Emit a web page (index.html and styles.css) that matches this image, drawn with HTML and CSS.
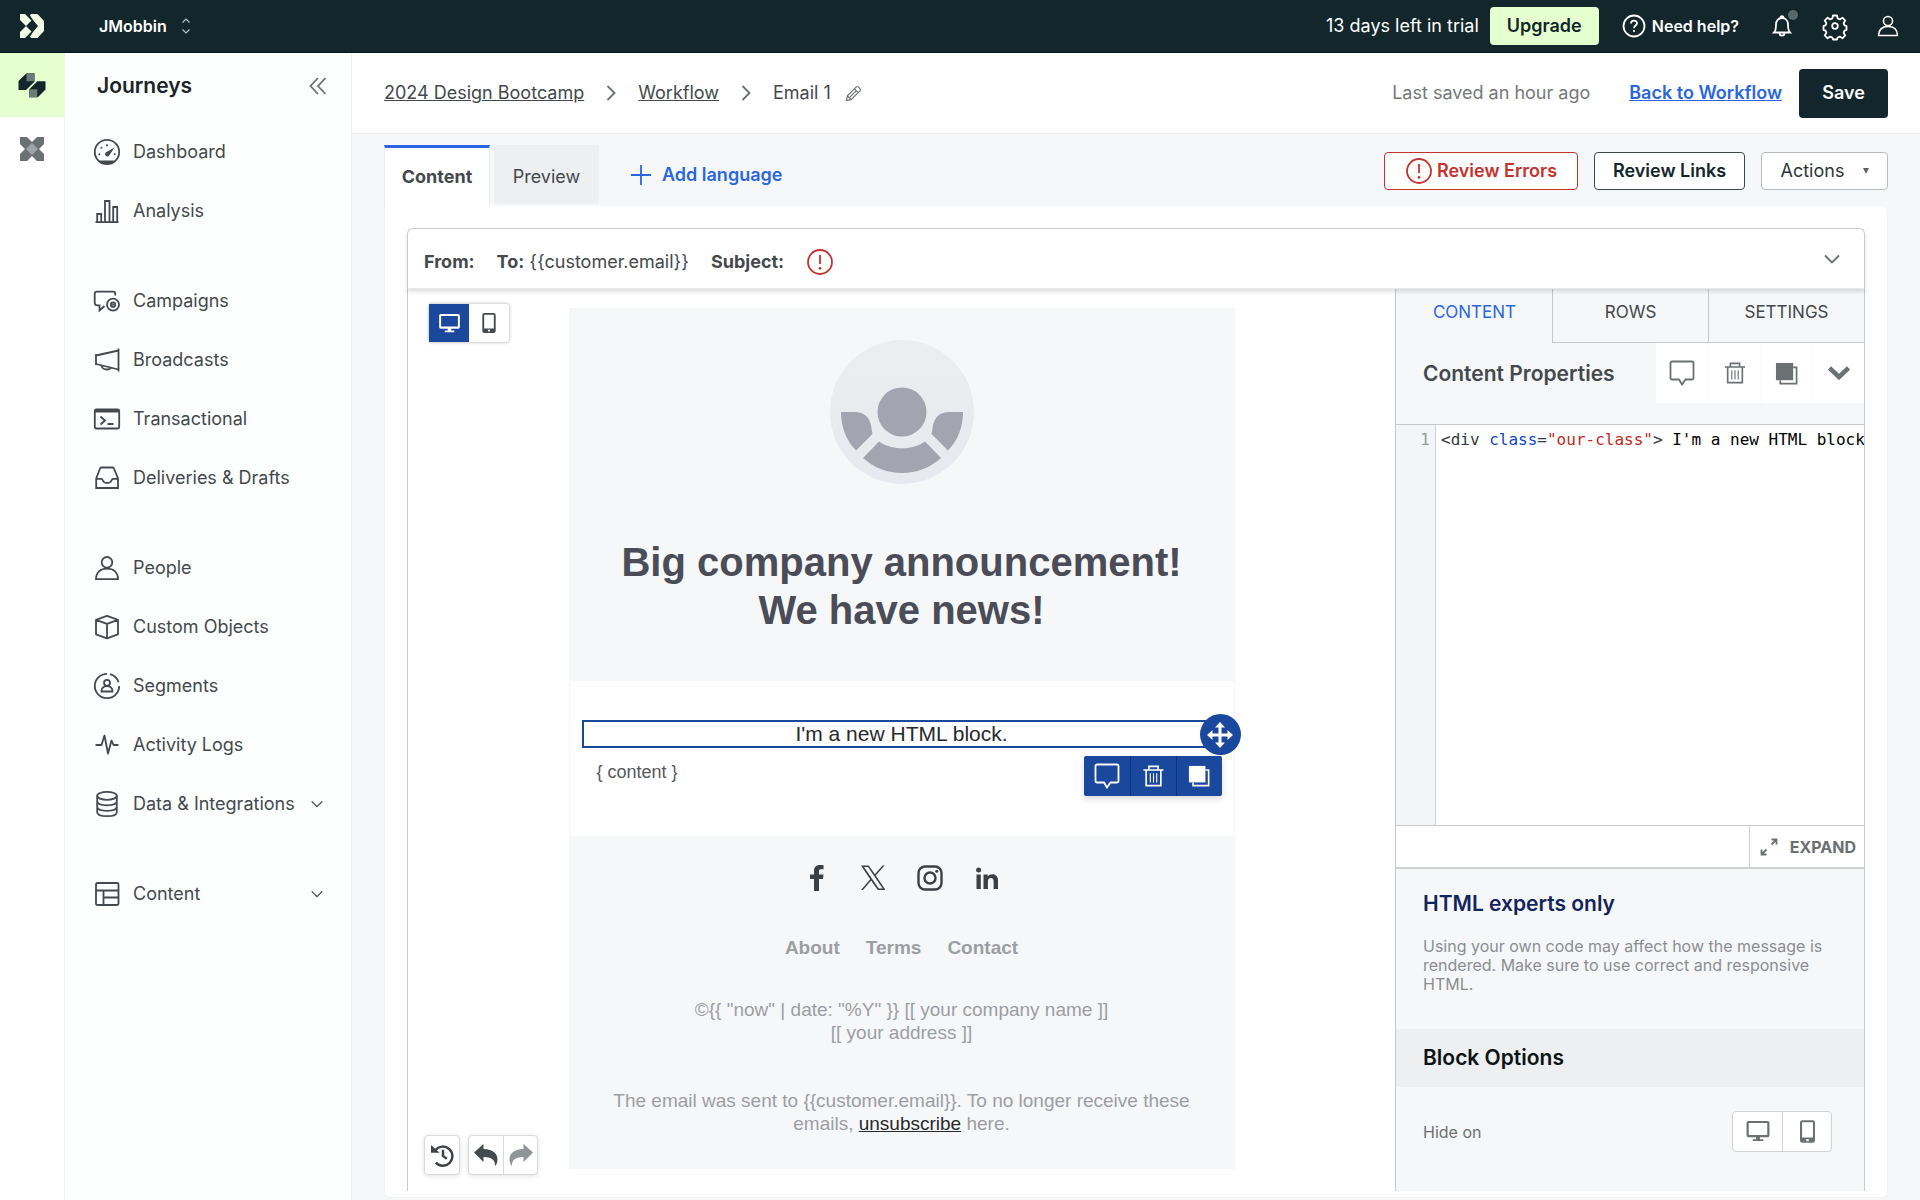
FILE: index.html
```html
<!DOCTYPE html>
<html lang="en">
<head>
<meta charset="utf-8">
<meta name="viewport" content="width=device-width, initial-scale=1">
<title>Email 1 – Journeys</title>
<link rel="stylesheet" href="styles.css">
</head>
<body>
<svg class="sprite" aria-hidden="true">
  <symbol id="chevron-right" viewBox="0 0 10 16"><path d="M1.500 1l7 7-7 7"/></symbol>
  <symbol id="chevron-down" viewBox="0 0 16 10"><path d="M1 1.500l7 7 7-7"/></symbol>
  <symbol id="alert" viewBox="0 0 28 28"><circle cx="14" cy="14" r="12"/><path d="M14 7v9"/><circle class="solid" cx="14" cy="20.300" r="1.400"/></symbol>
  <symbol id="person" viewBox="0 0 28 28"><circle cx="14" cy="8.300" r="5.300"/><path d="M3 25.200c0-7 4.500-10.500 11-10.500s11 3.500 11 10.500z"/></symbol>
  <symbol id="desktop" viewBox="0 0 24 22"><path class="solid" fill-rule="evenodd" d="M2 0h20a2 2 0 0 1 2 2v13a2 2 0 0 1-2 2h-8v2h3.500v2h-11v-2H10v-2H2a2 2 0 0 1-2-2V2a2 2 0 0 1 2-2zm.300 2.200v12.400h19.400V2.200z"/></symbol>
  <symbol id="mobile" viewBox="0 0 16 24"><path class="solid" fill-rule="evenodd" d="M2.500 0h11A2.500 2.500 0 0 1 16 2.500v19a2.500 2.500 0 0 1-2.500 2.500h-11A2.500 2.500 0 0 1 0 21.500v-19A2.500 2.500 0 0 1 2.500 0zM2.200 2.200v16.300h11.600V2.200zM6.700 20v2.300h2.600V20z"/></symbol>
  <symbol id="comment" viewBox="0 0 26 26"><path d="M3 1.500h20a1.500 1.500 0 0 1 1.500 1.500v15a1.500 1.500 0 0 1-1.500 1.500h-6.500L13 24.500l-3-5H3A1.500 1.500 0 0 1 1.500 18V3A1.500 1.500 0 0 1 3 1.500z"/></symbol>
  <symbol id="trash" viewBox="0 0 22 24"><path d="M0 5.500h22M6 5V1.500h10V5M3 6v16.500h16V6"/><path class="thin" d="M7.500 9v10M11 9v10M14.500 9v10"/></symbol>
  <symbol id="copy" viewBox="0 0 24 24"><path class="solid" d="M1 1h18v18H1z"/><path d="M19 5.500h3.500v17h-17V19"/></symbol>
</svg>

<header class="topbar">
  <a class="topbar-logo" href="#" aria-label="Home">
    <svg width="24" height="24" viewBox="0 0 24 24"><path fill="#f2ffe6" d="M0 0h5l6.500 6.500L6 12 0 6zM0 24h5l6.500-6.500L6 12l-6 6zM11 0h6.500L24 7v10l-6.500 7H11l-1-1.500L13 18l5-6-5-6-3-4.500z"/></svg>
  </a>
  <button class="workspace" type="button">JMobbin
    <svg class="line" width="10" height="16" viewBox="0 0 10 16"><path d="M1.500 4.500L5 1l3.500 3.500M1.500 11.500L5 15l3.500-3.500"/></svg>
  </button>
  <span class="trial">13 days left in trial</span>
  <button class="upgrade" type="button">Upgrade</button>
  <a class="help" href="#">
    <svg class="line" width="24" height="24" viewBox="0 0 24 24"><circle cx="12" cy="12" r="10.500"/><path d="M9 9.500c0-4 6-3.800 6-.300 0 2.300-3 2.400-3 5"/><circle class="solid" cx="12" cy="17" r="1.100"/></svg>
    Need help?
  </a>
  <button class="top-icon bell" type="button" aria-label="Notifications">
    <svg class="line" width="22" height="24" viewBox="0 0 22 24"><path d="M3 18.500c2-2 2-4 2-8 0-3.800 2.500-6.500 6-6.500s6 2.700 6 6.500c0 4 0 6 2 8zM9.500 3.700C9.500 1.500 12.500 1.500 12.500 3.700M8.500 19c0 3.500 5 3.500 5 0"/></svg>
    <span class="bell-dot"></span>
  </button>
  <button class="top-icon" type="button" aria-label="Settings">
    <svg class="line" width="24" height="24" viewBox="0 0 24 24"><circle cx="12" cy="12" r="2.800"/><path stroke-linejoin="round" d="M10 1.500h4l.700 3 2.100.900 2.600-1.700 2.900 2.900-1.700 2.600.900 2.100 2 .700v4l-2 .700-.900 2.100 1.700 2.600-2.900 2.900-2.600-1.700-2.100.900-.700 2h-4l-.700-2-2.100-.900-2.600 1.700-2.900-2.900 1.700-2.600-.900-2.100-2-.700v-4l2-.700.900-2.100-1.700-2.600 2.900-2.900 2.600 1.700 2.100-.900z"/></svg>
  </button>
  <button class="top-icon" type="button" aria-label="Account">
    <svg class="line" width="24" height="24"><use href="#person"/></svg>
  </button>
</header>

<div class="shell">
  <nav class="rail" aria-label="Products">
    <a class="rail-item active" href="#" aria-label="Journeys">
      <svg width="28" height="25" viewBox="0 0 28 25"><path fill="#12262b" d="M.500 8l8-7.800h8v8.500L8 17H.500zM11.300 16.300l8-8h8.200v8.200l-7.700 7.800h-8.500z"/><path fill="#6d7b78" d="M8.500.200h8v8h-8zM11.300 16.300h8v8h-8z"/></svg>
    </a>
    <a class="rail-item" href="#" aria-label="Data Pipelines">
      <svg width="24" height="24" viewBox="0 0 24 24"><path fill="#6b7072" d="M0 0h7l5 5 5-5h7v7l-5 5 5 5v7h-7l-5-5-5 5H0v-7l5-5-5-5z"/><path fill="#a0a4a6" d="M12 6l6 6-6 6-6-6z"/></svg>
    </a>
  </nav>

  <aside class="sidebar">
    <div class="sidebar-head">
      <h2>Journeys</h2>
      <button class="plain" type="button" aria-label="Collapse menu"><svg class="line" width="18" height="18" viewBox="0 0 18 18"><path d="M9 1L1.500 9 9 17M16.500 1L9 9l7.500 8"/></svg></button>
    </div>
    <nav class="menu" aria-label="Journeys">
      <div class="menu-group">
        <a href="#"><svg class="line" width="28" height="28" viewBox="0 0 28 28"><circle cx="14" cy="14" r="12.200"/><path class="solid" d="M6 22.500h16l-3 2.600-5 1.300-5-1.300z"/><path class="solid" d="M21.500 9.500l-5.500 8.200a2.300 2.300 0 1 1-3.300-3.200z"/><g class="solid"><circle cx="14" cy="7.300" r="1.100"/><circle cx="8.400" cy="9.700" r="1"/><circle cx="6.300" cy="16.200" r="1"/><circle cx="21.700" cy="16.200" r="1"/></g></svg>Dashboard</a>
        <a href="#"><svg class="line" width="28" height="28" viewBox="0 0 28 28"><path d="M2.500 25.200h23M4.200 25v-8h4v8M12 25V4h4.500v21M20.200 25V10h4v15"/></svg>Analysis</a>
      </div>
      <div class="menu-group">
        <a href="#"><svg class="line" width="28" height="28" viewBox="0 0 28 28"><path d="M22.300 8.500V7a2.300 2.300 0 0 0-2.300-2.300H4A2.300 2.300 0 0 0 1.700 7v9A2.300 2.300 0 0 0 4 18.300h2.500v5.200l5-4.500"/><circle cx="20" cy="17.700" r="6"/><circle cx="20" cy="17.700" r="2.200"/><circle class="solid" cx="20" cy="17.700" r="1"/></svg>Campaigns</a>
        <a href="#"><svg class="line" width="28" height="28" viewBox="0 0 28 28"><path d="M25.500 2.500v23M25.500 4.500L3 9.500M3 8v11M3 18l22.500 5.500M8.500 19.500c.500 4.500 7 5 9.500 2.400"/></svg>Broadcasts</a>
        <a href="#"><svg class="line" width="28" height="28" viewBox="0 0 28 28"><rect x="1.800" y="4.500" width="24.400" height="19" rx="1.500"/><path class="solid" d="M2 4.500h24v3H2z"/><path d="M7.500 11.500l4.500 4-4.500 4M14.500 19h6"/></svg>Transactional</a>
        <a href="#"><svg class="line" width="28" height="28" viewBox="0 0 28 28"><path d="M3.200 14.500L7 4.500a1.500 1.500 0 0 1 1.200-1h11.600a1.500 1.500 0 0 1 1.200 1l4 10v9.500H3.200zM3.200 14.800h5.500c1 0 1 4 4 4h3c3 0 3-4 4-4h5.300"/></svg>Deliveries &amp; Drafts</a>
      </div>
      <div class="menu-group">
        <a href="#"><svg class="line" width="28" height="28"><use href="#person"/></svg>People</a>
        <a href="#"><svg class="line" width="28" height="28" viewBox="0 0 28 28"><path stroke-linejoin="round" d="M14 2.800l11 4v14.500l-11 4-11-4V6.800zM3 6.800l11 4 11-4M14 10.800v14.500"/></svg>Custom Objects</a>
        <a href="#"><svg class="line" width="28" height="28" viewBox="0 0 28 28"><path d="M14 1.800A12.200 12.200 0 1 0 26.200 14M17 2.200a12.200 12.200 0 0 1 8.500 8"/><circle cx="14" cy="10.800" r="3"/><path d="M8.500 19.500c0-3.500 2.500-5.500 5.500-5.500s5.500 2 5.500 5.500z"/></svg>Segments</a>
        <a href="#"><svg class="line" width="28" height="28" viewBox="0 0 28 28"><path stroke-linejoin="round" d="M2.500 14h6l3-9.500 3.500 18 3.500-13 2 4.500h5"/></svg>Activity Logs</a>
        <a href="#"><svg class="line" width="28" height="28" viewBox="0 0 28 28"><ellipse cx="14" cy="5.800" rx="9.800" ry="4"/><path d="M4.200 5.800v16.400c0 5.300 19.600 5.300 19.600 0V5.800M4.200 11.300c0 5.300 19.600 5.300 19.600 0M4.200 16.800c0 5.300 19.600 5.300 19.600 0"/></svg>Data &amp; Integrations<svg class="line caret" width="12" height="8"><use href="#chevron-down"/></svg></a>
      </div>
      <div class="menu-group">
        <a href="#"><svg class="line" width="28" height="28" viewBox="0 0 28 28"><rect x="3" y="3" width="22.500" height="22" rx="1.500"/><path d="M3 10.500h22.500M10.500 10.500V25M10.500 17.500h15"/></svg>Content<svg class="line caret" width="12" height="8"><use href="#chevron-down"/></svg></a>
      </div>
    </nav>
  </aside>

  <main class="main">
    <div class="page-head">
      <nav class="crumbs" aria-label="Breadcrumb">
        <a href="#">2024 Design Bootcamp</a>
        <svg class="line" width="10" height="16"><use href="#chevron-right"/></svg>
        <a href="#">Workflow</a>
        <svg class="line" width="10" height="16"><use href="#chevron-right"/></svg>
        <span class="crumb-current">Email 1
          <button class="plain" type="button" aria-label="Rename"><svg class="line" width="17" height="17" viewBox="0 0 18 18"><path d="M1.500 16.500l1-5L12 2a1.500 1.500 0 0 1 2 0l2 2a1.500 1.500 0 0 1 0 2l-9.500 9.500zM10 4l4 4M2.500 11.500l4 4M12 6l-7 7"/></svg></button>
        </span>
      </nav>
      <span class="saved">Last saved an hour ago</span>
      <a class="back" href="#">Back to Workflow</a>
      <button class="save" type="button">Save</button>
    </div>

    <div class="toolbar">
      <button class="tab active" type="button">Content</button>
      <button class="tab" type="button">Preview</button>
      <button class="add-language" type="button"><svg class="line" width="22" height="22" viewBox="0 0 22 22"><path d="M11 1v20M1 11h20"/></svg>Add language</button>
      <div class="toolbar-actions">
        <button class="outline danger" type="button"><svg class="line" width="28" height="28"><use href="#alert"/></svg>Review Errors</button>
        <button class="outline dark" type="button">Review Links</button>
        <label class="outline select"><select aria-label="Actions"><option>Actions</option></select><svg width="6" height="6" viewBox="0 0 6 6"><path fill="#5c6164" d="M0 0h6L3 6z"/></svg></label>
      </div>
    </div>

    <section class="card">
      <div class="builder">
        <div class="envelope">
          <b>From:</b>
          <span><b>To:</b> {{customer.email}}</span>
          <b>Subject:</b>
          <svg class="line alert" width="28" height="28"><use href="#alert"/></svg>
          <button class="plain envelope-toggle" type="button" aria-label="Show details"><svg class="line" width="16" height="10"><use href="#chevron-down"/></svg></button>
        </div>

        <div class="workarea">
          <div class="canvas">
            <div class="device-toggle">
              <button class="active" type="button" aria-label="Desktop"><svg width="21" height="19"><use href="#desktop"/></svg></button>
              <button type="button" aria-label="Mobile"><svg width="14" height="20"><use href="#mobile"/></svg></button>
            </div>

            <article class="email">
              <div class="email-hero">
                <svg width="144" height="144" viewBox="0 0 144 144">
                  <defs><linearGradient id="disc" x2="0" y2="1"><stop offset="0" stop-color="#ecedef"/><stop offset="1" stop-color="#e6e9ef"/></linearGradient></defs>
                  <circle cx="72" cy="72" r="72" fill="url(#disc)"/>
                  <g fill="#a2a5b0"><circle cx="72" cy="72" r="24.500"/><path d="M11 72h14c9 0 14 5 16 13 .500 4 1 7 1.500 9L26 110.500C16 100 11 87 11 72z"/><path d="M133 72h-14c-9 0-14 5-16 13-.500 4-1 7-1.500 9l16.500 16.500C128 100 133 87 133 72z"/><path d="M49 101.500c12 9 34 9 46 0L111 118c-22 20-56 20-78 0z"/></g>
                </svg>
                <h1>Big company announcement! We have news!</h1>
              </div>
              <div class="email-body">
                <div class="html-block">I'm a new HTML block.
                  <button class="move" type="button" aria-label="Move block"><svg width="26" height="26" viewBox="0 0 26 26"><path fill="#fff" d="M13 0l5 5.500h-3.500v6h6V8l5.500 5-5.500 5v-3.500h-6v6H18L13 26l-5-5.500h3.500v-6h-6V18L0 13l5.500-5v3.500h6v-6H8z"/></svg></button>
                  <div class="block-tools">
                    <button type="button" aria-label="Comment"><svg class="line" width="26" height="26"><use href="#comment"/></svg></button>
                    <button type="button" aria-label="Delete"><svg class="line" width="21" height="22"><use href="#trash"/></svg></button>
                    <button type="button" aria-label="Duplicate"><svg class="line" width="22" height="22"><use href="#copy"/></svg></button>
                  </div>
                </div>
                <p>{ content }</p>
              </div>
              <footer class="email-foot">
                <div class="social">
                  <a href="#" aria-label="Facebook"><svg width="24" height="26" viewBox="0 0 24 26"><path d="M9 26V14H5V9.500h4V6c0-4 2.300-6 6-6h3.500v4.300H16c-1.700 0-2 .700-2 2.200v3h4.500L18 14h-4v12z"/></svg></a>
                  <a href="#" aria-label="X"><svg width="24" height="26" viewBox="0 0 24 26"><path d="M0 .500h7.700l6.200 8.700L21.500.500h2L14.800 10.500 24.500 25h-7.700l-6.700-9.500L2 25H0l9.200-10.800zM3 2l14.700 21.500h4L7 2z"/></svg></a>
                  <a href="#" aria-label="Instagram"><svg width="26" height="26" viewBox="0 0 26 26"><g fill="none" stroke="#3b4045" stroke-width="2.400"><rect x="1.500" y="1.500" width="23" height="23" rx="6.500"/><circle cx="13" cy="13" r="5.500"/></g><circle cx="19.800" cy="6.300" r="1.500"/></svg></a>
                  <a href="#" aria-label="LinkedIn"><svg width="24" height="26" viewBox="0 0 24 26"><path d="M1.500 9.500h4.300V24H1.500zM3.600 2.500a2.500 2.500 0 1 1 0 5 2.500 2.500 0 0 1 0-5zM8.500 9.500h4.200v2c2.300-3.800 10.300-3.300 10.300 3.500v9h-4.400v-8c0-4.300-5.700-3.700-5.700 0v8H8.500z"/></svg></a>
                </div>
                <div class="foot-links"><a href="#">About</a><a href="#">Terms</a><a href="#">Contact</a></div>
                <p>©{{ "now" | date: "%Y" }} [[ your company name ]]<br>[[ your address ]]</p>
                <p>The email was sent to {{customer.email}}. To no longer receive these emails, <a href="#">unsubscribe</a> here.</p>
              </footer>
            </article>

            <div class="history">
              <div class="history-group"><button type="button" aria-label="Version history"><svg width="23" height="23" viewBox="0 0 24 24"><path fill="none" stroke="#3f4447" stroke-width="2.600" d="M4.500 6.500A10 10 0 1 1 5 19.500M12.500 6v6.500l4 3"/><path fill="#3f4447" d="M0 1l9 8H0z"/></svg></button></div>
              <div class="history-group">
                <button type="button" aria-label="Undo"><svg width="24" height="22" viewBox="0 0 24 22"><path fill="#43494c" d="M0 8.500L9.500 0v5c10 .300 14 5 14 10.500 0 3-1 5-2.500 6.500.500-6-3.500-9-11.500-9v5z"/></svg></button>
                <button type="button" aria-label="Redo"><svg width="24" height="22" viewBox="0 0 24 22"><path fill="#8f9496" d="M24 8.500L14.500 0v5C4.500 5.300.500 10 .500 15.500c0 3 1 5 2.500 6.500-.500-6 3.500-9 11.500-9v5z"/></svg></button>
              </div>
            </div>
          </div>

          <aside class="panel">
            <div class="panel-tabs">
              <button class="active" type="button">CONTENT</button>
              <button type="button">ROWS</button>
              <button type="button">SETTINGS</button>
            </div>
            <div class="props-head">
              <h3>Content Properties</h3>
              <div class="props-tools">
                <button type="button" aria-label="Comment"><svg class="line" width="26" height="26"><use href="#comment"/></svg></button>
                <button type="button" aria-label="Delete"><svg class="line" width="22" height="22"><use href="#trash"/></svg></button>
                <button type="button" aria-label="Duplicate"><svg class="line" width="23" height="23"><use href="#copy"/></svg></button>
                <button type="button" aria-label="Collapse"><svg width="22" height="14" viewBox="0 0 22 14"><path fill="none" stroke="#6c7173" stroke-width="4.500" d="M1.500 2L11 11l9.500-9"/></svg></button>
              </div>
            </div>
            <div class="code">
              <span class="gutter">1</span>
              <pre><code>&lt;div <span class="attr">class</span>=<span class="str">"our-class"</span>&gt; <span class="txt">I'm a new HTML block</span></code></pre>
            </div>
            <div class="code-foot">
              <button type="button"><svg width="18" height="18" viewBox="0 0 18 18"><path fill="none" stroke="#6b7072" stroke-width="1.800" d="M11.500 1.500h5v5M16 2l-4.500 4.500M6.500 16.500h-5v-5M2 16l4.500-4.500"/></svg>EXPAND</button>
            </div>
            <div class="note">
              <h3>HTML experts only</h3>
              <p>Using your own code may affect how the message is rendered. Make sure to use correct and responsive HTML.</p>
            </div>
            <h3 class="band">Block Options</h3>
            <div class="option">
              <span>Hide on</span>
              <div class="hide-toggle">
                <button type="button" aria-label="Hide on desktop"><svg width="24" height="21"><use href="#desktop"/></svg></button>
                <button type="button" aria-label="Hide on mobile"><svg width="15" height="23"><use href="#mobile"/></svg></button>
              </div>
            </div>
          </aside>
        </div>
      </div>
    </section>
  </main>
</div>
</body>
</html>
```
FILE: styles.css
```css
* { box-sizing: border-box; }

body {
  margin: 0;
  min-height: 100vh;
  display: flex;
  flex-direction: column;
  background: #f6f7f9;
  color: #43494c;
  font: 18px/24px Inter, "Liberation Sans", sans-serif;
}

h1, h2, h3, p, pre { margin: 0; }

button, select {
  font: inherit;
  color: inherit;
  background: none;
  border: 0;
  padding: 0;
  cursor: pointer;
}

a { color: inherit; text-decoration: none; }
svg { display: block; flex: none; }

.sprite { position: absolute; width: 0; height: 0; }
.line { fill: none; stroke: currentColor; stroke-width: 1.8; overflow: visible; }
.solid { fill: currentColor; stroke: none; }
.thin { stroke-width: 1.2; }
.plain { display: flex; color: #6b7072; }

/* Top bar */
.topbar {
  height: 53px;
  flex: none;
  display: flex;
  align-items: center;
  padding: 0 20px;
  background: #12262b;
  color: #fff;
  border-bottom: 1px solid #06161a;
}
.topbar-logo { width: 79px; }
.workspace {
  display: flex;
  align-items: center;
  gap: 14px;
  font-size: 16px;
  font-weight: 600;
  margin-right: auto;
}
.workspace svg { color: #b9c2c4; stroke-width: 1.2; }
.trial { margin-right: 11px; }
.upgrade {
  width: 109px;
  height: 38px;
  border-radius: 4px;
  background: #e6ffcf;
  color: #12262b;
  font-weight: 600;
}
.help {
  display: flex;
  align-items: center;
  gap: 6px;
  margin: 0 31px 0 23px;
  font-size: 16px;
  font-weight: 600;
}
.top-icon { position: relative; width: 24px; display: flex; justify-content: center; }
.top-icon + .top-icon { margin-left: 29px; }
.bell-dot {
  position: absolute;
  top: -4px;
  right: -4px;
  width: 10px;
  height: 10px;
  border-radius: 50%;
  background: #59686b;
}

/* Navigation */
.shell { flex: 1; display: flex; }
.rail { width: 65px; flex: none; background: #fff; border-right: 1px solid #f0f1f2; }
.rail-item { height: 64px; display: flex; align-items: center; justify-content: center; }
.rail-item.active { background: #e6ffcf; }

.sidebar { width: 287px; flex: none; background: #fdfefe; border-right: 1px solid #eceef0; }
.sidebar-head {
  display: flex;
  align-items: center;
  justify-content: space-between;
  height: 66px;
  padding: 0 24px 0 32px;
}
.sidebar-head h2 { font-size: 21px; font-weight: 600; color: #1b2427; }
.menu { padding-top: 3px; }
.menu-group + .menu-group { margin-top: 31px; }
.menu-group a {
  display: flex;
  align-items: center;
  height: 59px;
  gap: 12px;
  padding: 0 28px;
}
.caret { margin-left: auto; }

/* Page header */
.main { flex: 1; min-width: 0; display: flex; flex-direction: column; }
.page-head {
  display: flex;
  align-items: center;
  height: 81px;
  padding: 0 32px;
  background: #fff;
  border-bottom: 1px solid #eceef0;
}
.crumbs { display: flex; align-items: center; gap: 22px; margin-right: auto; }
.crumbs > svg { color: #6b7072; }
.crumbs a { text-decoration: underline; }
.crumb-current { display: flex; align-items: center; gap: 14px; }
.crumb-current svg { stroke-width: 1.2; }
.saved { color: #74797b; margin-right: 39px; }
.back { color: #2a66e0; font-weight: 600; text-decoration: underline; margin-right: 17px; }
.save {
  width: 89px;
  height: 49px;
  border-radius: 4px;
  background: #12262b;
  color: #fff;
  font-weight: 600;
}

/* Tabs and actions */
.toolbar { display: flex; padding: 11px 32px 0; }
.tab {
  width: 105px;
  height: 59px;
  margin-right: 4px;
  padding-top: 4px;
  background: #eeeff1;
  border-radius: 3px;
}
.tab.active {
  width: 106px;
  height: 61px;
  padding-top: 0;
  background: #fff;
  border: 1px solid #eceef0;
  border-width: 3px 1px 0;
  border-top-color: #2a66e0;
  border-radius: 0;
  font-weight: 700;
}
.add-language {
  display: flex;
  align-items: center;
  gap: 10px;
  height: 59px;
  margin-left: 27px;
  color: #2a66e0;
  font-weight: 600;
}
.toolbar-actions { display: flex; gap: 16px; margin: 7px 0 0 auto; }
.outline {
  display: flex;
  align-items: center;
  justify-content: center;
  height: 38px;
  background: #fff;
  border: 1px solid;
  border-radius: 4px;
  font-weight: 600;
}
.danger { width: 194px; gap: 4px; color: #c4332d; }
.dark { width: 151px; color: #12262b; border-color: #3a484c; }
.select { width: 127px; gap: 18px; border-color: #b9bdbf; color: #2e3538; font-weight: 400; }
.select select { appearance: none; outline: 0; }

/* Builder */
.card {
  flex: 1;
  display: flex;
  margin: 0 32px 2px;
  padding: 22px 22px 6px;
  background: #fff;
  border: 1px solid #f0f1f3;
  border-top: 0;
  border-radius: 0 6px 6px 6px;
}
.builder { flex: 1; min-width: 0; display: flex; flex-direction: column; }
.envelope {
  position: relative;
  display: flex;
  align-items: center;
  gap: 22px;
  height: 61px;
  padding: 6px 16px 0;
  background: #fff;
  border: 1px solid #c6cacc;
  border-bottom-color: #e8e9ea;
  border-radius: 6px 6px 0 0;
  box-shadow: 0 3px 4px rgba(0, 0, 0, .12);
}
.envelope b { font-weight: 700; }
.alert { color: #c4332d; }
.envelope-toggle { margin: 0 8px 6px auto; }
.workarea {
  flex: 1;
  display: flex;
  border: 1px solid #c6cacc;
  border-width: 0 1px;
}

/* Canvas */
.canvas { position: relative; flex: 1; min-width: 0; padding: 19px 20px; }
.device-toggle {
  position: absolute;
  top: 15px;
  left: 21px;
  display: flex;
  border-radius: 3px;
  box-shadow: 0 0 3px 1px rgba(0, 0, 0, .2);
  background: #fff;
}
.device-toggle button {
  width: 40px;
  height: 38px;
  display: flex;
  align-items: center;
  justify-content: center;
}
.device-toggle .active { background: #1a489c; color: #fff; }

.email {
  max-width: 666px;
  margin: 0 auto;
  border: 1px solid #f6f7f9;
  font-family: "Liberation Sans", Arial, sans-serif;
  text-align: center;
}
.email-hero {
  display: flex;
  flex-direction: column;
  align-items: center;
  padding: 31px 40px 47px;
  background: #f6f7f9;
}
.email-hero h1 { margin-top: 54px; font-size: 40px; line-height: 48px; color: #4a4c57; }
.email-body { padding: 39px 12px 52px; }
.html-block {
  position: relative;
  height: 28px;
  border: 2px solid #1a489c;
  font-size: 21px;
  color: #26292c;
}
.move {
  position: absolute;
  top: -8px;
  right: -21px;
  width: 41px;
  height: 41px;
  border-radius: 50%;
  background: #1a489c;
  display: flex;
  align-items: center;
  justify-content: center;
}
.block-tools {
  position: absolute;
  top: 34px;
  right: -2px;
  display: flex;
  border-radius: 2px;
  box-shadow: 0 3px 6px rgba(0, 0, 0, .15);
  background: #1a489c;
  color: #fff;
}
.block-tools button {
  width: 46px;
  height: 40px;
  display: flex;
  align-items: center;
  justify-content: center;
}
.block-tools button + button { border-left: 1px solid #0d2f7d; }
.email-body p { margin: 12px 15px 0; font-size: 18px; text-align: left; color: #55575c; }

.email-foot {
  padding: 29px 36px 33px;
  background: #f6f7f9;
  font-size: 19px;
  line-height: 23px;
  color: #9b9ea2;
}
.social { display: flex; justify-content: center; gap: 32px; fill: #3b4045; }
.foot-links { display: flex; justify-content: center; gap: 26px; margin-top: 45px; font-weight: 700; }
.email-foot p { margin-top: 39px; }
.email-foot p + p { margin-top: 45px; }
.email-foot p a { color: #26292c; text-decoration: underline; }

.history { position: absolute; left: 16px; bottom: 16px; display: flex; gap: 8px; }
.history-group {
  display: flex;
  background: #fff;
  border: 1px solid #d8dadc;
  border-radius: 4px;
  box-shadow: 0 1px 5px rgba(0, 0, 0, .12);
}
.history-group button {
  width: 34px;
  height: 38px;
  display: flex;
  align-items: center;
  justify-content: center;
}
.history-group button + button { border-left: 1px solid #d8dadc; }

/* Properties panel */
.panel {
  width: 469px;
  flex: none;
  border-left: 1px solid #c6cacc;
  background: #f6f7f9;
}
.panel-tabs { display: flex; }
.panel-tabs button {
  flex: 1;
  height: 54px;
  padding-bottom: 8px;
  border-left: 1px solid #c6cacc;
  border-bottom: 1px solid #c6cacc;
  font-size: 17px;
}
.panel-tabs .active { color: #2a66e0; border-color: transparent; }
.props-head {
  display: flex;
  justify-content: space-between;
  height: 81px;
  padding-left: 27px;
}
.panel h3 { font-size: 21px; font-weight: 600; line-height: 26px; }
.props-head h3 { margin-top: 18px; }
.props-tools { display: flex; height: 60px; background: #fff; color: #6b7072; }
.props-tools button {
  width: 52px;
  display: flex;
  align-items: center;
  justify-content: center;
}
.props-tools button + button { border-left: 1px solid #f8f9fa; }
.code {
  display: flex;
  height: 402px;
  overflow: hidden;
  background: #fff;
  border: 1px solid #c6cacc;
  border-width: 1px 0;
  font: 16px/20px "DejaVu Sans Mono", monospace;
  color: #33383a;
}
.gutter {
  width: 40px;
  flex: none;
  padding: 5px 5px 0 0;
  text-align: right;
  color: #979b9d;
  background: #f4f5f7;
  border-right: 1px solid #d0d3d5;
}
.code pre { padding: 5px 0 0 5px; font: inherit; }
.code code { font: inherit; }
.attr { color: #1545c4; }
.str { color: #bd2a22; }
.txt { color: #000; }
.code-foot {
  display: flex;
  justify-content: flex-end;
  height: 43px;
  background: #fff;
  border-bottom: 2px solid #d0d3d5;
}
.code-foot button {
  display: flex;
  align-items: center;
  gap: 12px;
  padding: 0 8px 0 10px;
  border-left: 1px solid #d0d3d5;
  font-size: 16px;
  font-weight: 700;
  color: #6b7072;
}
.note { padding: 22px 27px 35px; color: #8a8e91; }
.note h3 { color: #12245c; }
.note p { margin-top: 20px; font-size: 16px; line-height: 19px; }
.panel .band { padding: 16px 27px; background: #edeff1; color: #0c1416; font-weight: 600; }
.option {
  display: flex;
  align-items: center;
  justify-content: space-between;
  padding: 24px 32px 36px 27px;
  font-size: 16px;
  color: #6b7072;
}
.hide-toggle {
  display: flex;
  background: #fff;
  border: 1px solid #d0d3d5;
  border-radius: 4px;
}
.hide-toggle button {
  width: 49px;
  height: 39px;
  display: flex;
  align-items: center;
  justify-content: center;
}
.hide-toggle button + button { border-left: 1px solid #d0d3d5; }
```
